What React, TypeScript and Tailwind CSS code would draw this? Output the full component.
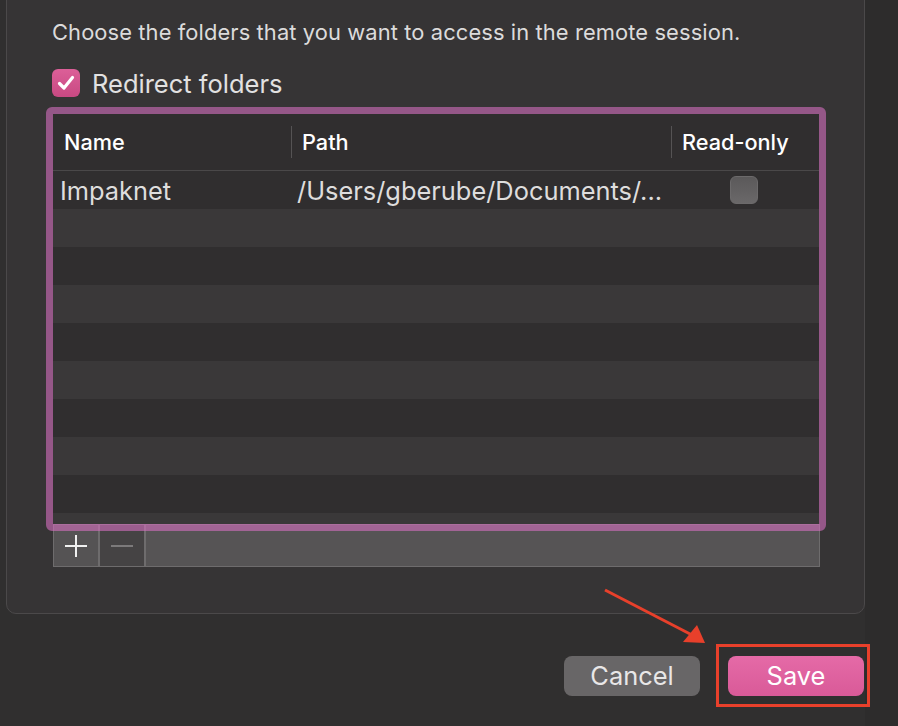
import React from "react";

const rows = Array.from({ length: 10 });

export default function App() {
  return (
    <div className="relative w-[898px] h-[726px] overflow-hidden bg-[#302f2f] font-[Inter,sans-serif]">
      <div className="flex h-full">
        <div className="w-[6px] shrink-0" />
        <div className="flex flex-col w-[859px] shrink-0">
          {/* group box */}
          <div className="mt-[-20px] h-[634px] rounded-[10px] border border-[#4b494a] bg-[#363435] pt-[37px]">
            <div className="pl-[45px] h-[28px] flex items-center text-[21.9px] text-[#dcdbdb] tracking-[0.1px] whitespace-nowrap">
              Choose the folders that you want to access in the remote session.
            </div>
            <div className="pl-[45px] mt-[23px] h-[28px] flex items-center gap-[12px]">
              <div className="w-[28px] h-[28px] rounded-[6px] bg-gradient-to-b from-[#dc5f98] to-[#c84982] flex items-center justify-center">
                <svg width="20" height="20" viewBox="0 0 20 20">
                  <path d="M3.5 10.5 L8 15 L16.5 4.5" fill="none" stroke="#ffffff" strokeWidth="3.2" strokeLinecap="round" strokeLinejoin="round" />
                </svg>
              </div>
              <span className="text-[25.5px] text-[#e2e1e1] pt-[2px]">Redirect folders</span>
            </div>
            {/* table with focus ring */}
            <div className="ml-[39px] mt-[10px] w-[780px]">
              <div className="relative z-10 h-[424px] rounded-[6px] border-[7px] border-[rgba(214,112,192,0.6)] overflow-hidden">
                <div className="h-full bg-[#302e2f] overflow-hidden">
                  <div className="h-[57px] flex items-center border-b border-[#4a4849] text-[21.7px] font-medium text-white">
                    <div className="w-[238px] pl-[11px]">Name</div>
                    <div className="w-px h-[32px] bg-[#555354]" />
                    <div className="w-[379px] pl-[10px]">Path</div>
                    <div className="w-px h-[32px] bg-[#555354]" />
                    <div className="flex-1 pl-[10px]">Read-only</div>
                  </div>
                  {rows.map((_, i) => (
                    <div
                      key={i}
                      className={`h-[38px] flex items-center text-[25.4px] text-[#dedddd] ${i % 2 === 1 ? "bg-[#3a3839]" : "bg-[#302e2f]"}`}
                    >
                      {i === 0 && (
                        <>
                          <div className="w-[238px] pl-[7px] pt-[2px]">Impaknet</div>
                          <div className="w-[380px] pl-[6px] pt-[2px] whitespace-nowrap overflow-hidden">/Users/gberube/Documents/...</div>
                          <div className="flex-1 flex justify-center pr-[3px]">
                            <div className="w-[28px] h-[28px] rounded-[6px] bg-gradient-to-b from-[#5b595a] to-[#6a6869] border border-[#6c6a6b]" />
                          </div>
                        </>
                      )}
                    </div>
                  ))}
                </div>
              </div>
              {/* bottom bar */}
              <div className="relative mt-[-7px] ml-[7px] w-[767px] h-[43px] flex border border-[#6e6c6d] bg-[#565455]">
                <div className="w-[46px] h-full bg-[#555354] flex items-center justify-center border-r-2 border-[#6e6c6d]">
                  <svg width="24" height="24" viewBox="0 0 24 24">
                    <path d="M12 1 V23 M1 12 H23" stroke="#f0f0f0" strokeWidth="2" />
                  </svg>
                </div>
                <div className="w-[46px] h-full bg-[#454344] flex items-center justify-center border-r-2 border-[#6e6c6d]">
                  <svg width="24" height="24" viewBox="0 0 24 24">
                    <path d="M1 12 H23" stroke="#7c7a7b" strokeWidth="2" />
                  </svg>
                </div>
                <div className="flex-1" />
              </div>
            </div>
          </div>
          {/* buttons */}
          <div className="mt-[42px] flex justify-end gap-[28px] pr-[1px]">
            <button className="w-[136px] h-[40px] rounded-[8px] bg-[#686667] text-[25.4px] text-[#e8e7e7] flex items-center justify-center">
              Cancel
            </button>
            <div className="relative">
              <button className="w-[136px] h-[40px] rounded-[8px] bg-gradient-to-b from-[#e56aa7] to-[#d95a98] text-[25.4px] text-white flex items-center justify-center">
                Save
              </button>
              <div className="absolute left-[-12px] top-[-12px] right-[-6px] bottom-[-11px] border-[3px] border-[#e8402b]" />
            </div>
          </div>
        </div>
        <div className="flex-1 bg-[#2d2c2c]" />
      </div>
      {/* arrow annotation */}
      <svg className="absolute left-0 top-0" width="898" height="726">
        <line x1="605" y1="590" x2="692" y2="635" stroke="#e8402b" strokeWidth="3" />
        <polygon points="705,643 683,642 697,625" fill="#e8402b" />
      </svg>
    </div>
  );
}
